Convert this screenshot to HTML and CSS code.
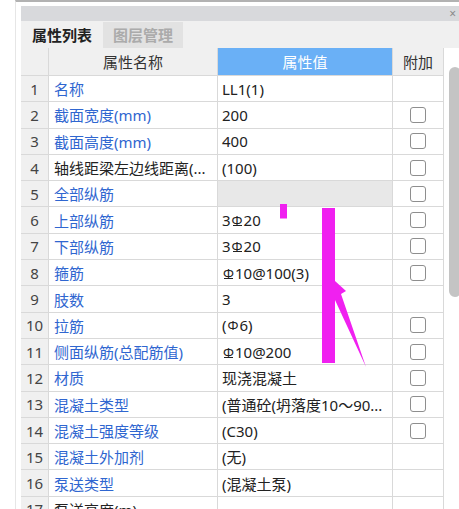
FILE: index.html
```html
<!DOCTYPE html>
<html lang="zh-CN">
<head>
<meta charset="utf-8">
<title>属性列表</title>
<link rel="stylesheet" href="styles.css">
</head>
<body>
<div class="page">
  <div class="outer">
    <div class="panel">
      <div class="titlebar"><span class="close">×</span></div>
      <div class="tabs">
        <div class="tab active">属性列表</div>
        <div class="tab">图层管理</div>
      </div>
      <div class="main">
        <div class="grid">
          <div class="c h"></div>
          <div class="c h">属性名称</div>
          <div class="c h blue">属性值</div>
          <div class="c h">附加</div>

          <div class="c num">1</div><div class="c name">名称</div><div class="c val">LL1(1)</div><div class="c add"></div>
          <div class="c num">2</div><div class="c name">截面宽度(mm)</div><div class="c val">200</div><div class="c add"><span class="cb"></span></div>
          <div class="c num">3</div><div class="c name">截面高度(mm)</div><div class="c val">400</div><div class="c add"><span class="cb"></span></div>
          <div class="c num">4</div><div class="c name k">轴线距梁左边线距离(...</div><div class="c val">(100)</div><div class="c add"><span class="cb"></span></div>
          <div class="c num">5</div><div class="c name">全部纵筋</div><div class="c val dis"></div><div class="c add"><span class="cb"></span></div>
          <div class="c num">6</div><div class="c name">上部纵筋</div><div class="c val">3<span class="g g3">Φ</span>20</div><div class="c add"><span class="cb"></span></div>
          <div class="c num">7</div><div class="c name">下部纵筋</div><div class="c val">3<span class="g g3">Φ</span>20</div><div class="c add"><span class="cb"></span></div>
          <div class="c num">8</div><div class="c name">箍筋</div><div class="c val"><span class="g g3">Φ</span>10@100(3)</div><div class="c add"><span class="cb"></span></div>
          <div class="c num">9</div><div class="c name">肢数</div><div class="c val">3</div><div class="c add"></div>
          <div class="c num">10</div><div class="c name">拉筋</div><div class="c val">(<span class="g">Φ</span>6)</div><div class="c add"><span class="cb"></span></div>
          <div class="c num">11</div><div class="c name">侧面纵筋(总配筋值)</div><div class="c val"><span class="g g3">Φ</span>10@200</div><div class="c add"><span class="cb"></span></div>
          <div class="c num">12</div><div class="c name">材质</div><div class="c val">现浇混凝土</div><div class="c add"><span class="cb"></span></div>
          <div class="c num">13</div><div class="c name">混凝土类型</div><div class="c val">(普通砼(坍落度10～90...</div><div class="c add"><span class="cb"></span></div>
          <div class="c num">14</div><div class="c name">混凝土强度等级</div><div class="c val">(C30)</div><div class="c add"><span class="cb"></span></div>
          <div class="c num">15</div><div class="c name">混凝土外加剂</div><div class="c val">(无)</div><div class="c add"></div>
          <div class="c num">16</div><div class="c name">泵送类型</div><div class="c val">(混凝土泵)</div><div class="c add"></div>
          <div class="c num">17</div><div class="c name k">泵送高度(m)</div><div class="c val"></div><div class="c add"></div>
        </div>
        <div class="scroll"><div class="thumb"></div></div>
      </div>
    </div>
  </div>
  <svg class="annot" width="459" height="509" viewBox="0 0 459 509">
    <rect x="280" y="204" width="7" height="14.5" fill="#f020f0"/>
    <rect x="322" y="208" width="13" height="155" fill="#f020f0"/>
    <polygon points="335,281 346,291 341,294 366,367 335,300" fill="#f020f0"/>
  </svg>
</div>
</body>
</html>
```

FILE: styles.css
```css
html, body {
  margin: 0;
  height: 509px;
  overflow: hidden;
  background: #ffffff;
}

body {
  font-family: "Noto Sans", "Noto Sans CJK SC", sans-serif;
  font-size: 15px;
  color: #222222;
}

.page {
  position: relative;
  height: 509px;
  padding-left: 15px;
}

.outer {
  height: 100%;
  border-left: 1px solid #e6e6e6;
  border-top: 2px solid #b2b2b2;
  padding-left: 5px;
  padding-top: 4px;
}

.titlebar {
  height: 15px;
  background: #d8d9dc;
  display: flex;
  justify-content: flex-end;
  align-items: center;
  padding-right: 3px;
}

.close {
  font-size: 12px;
  line-height: 15px;
  color: #8a8a8a;
}

.tabs {
  height: 27px;
  background: #f0f0f0;
  display: flex;
}

.tab {
  padding: 0 10px;
  line-height: 26px;
  height: 26px;
  margin-top: 1px;
  font-weight: bold;
  background: #e2e2e2;
  color: #ababab;
}

.tab.active {
  padding: 0 11px;
  background: #f0f0f0;
  color: #222222;
}

.main {
  display: flex;
}

.grid {
  display: grid;
  grid-template-columns: 28px 169px 175px 51px;
  grid-template-rows: 28px;
  grid-auto-rows: 26.3px;
}

.c {
  box-sizing: border-box;
  border-right: 1px solid #d9d9d9;
  border-bottom: 1px solid #d9d9d9;
  display: flex;
  align-items: center;
  white-space: nowrap;
  overflow: hidden;
}

.h {
  background: #f0f0f0;
  justify-content: center;
  color: #333333;
}

.h.blue {
  background: #6ab0f6;
  color: #ffffff;
}

.num {
  background: #f0f0f0;
  justify-content: center;
  color: #444444;
}

.name {
  padding-left: 5px;
  color: #2f66d0;
}

.name.k {
  color: #222222;
}

.val {
  padding-left: 4px;
  color: #222222;
}

.val.dis {
  background: #e8e8e8;
}

.add {
  justify-content: center;
}

.cb {
  width: 16px;
  height: 16px;
  box-sizing: border-box;
  border: 1.5px solid #8e8e8e;
  border-radius: 3px;
  background: #ffffff;
}

.g {
  font-size: 13px;
  display: inline-block;
  position: relative;
  margin: 0 1px;
}

.g3::after {
  content: "";
  position: absolute;
  left: 1px;
  right: 1px;
  bottom: 3px;
  height: 1px;
  background: currentColor;
}

.scroll {
  flex: 1;
  padding-left: 5px;
  padding-top: 19px;
}

.thumb {
  width: 12px;
  height: 230px;
  border-radius: 6px;
  background: #c4c4c4;
}

.annot {
  position: absolute;
  left: 0;
  top: 0;
  pointer-events: none;
}
```
